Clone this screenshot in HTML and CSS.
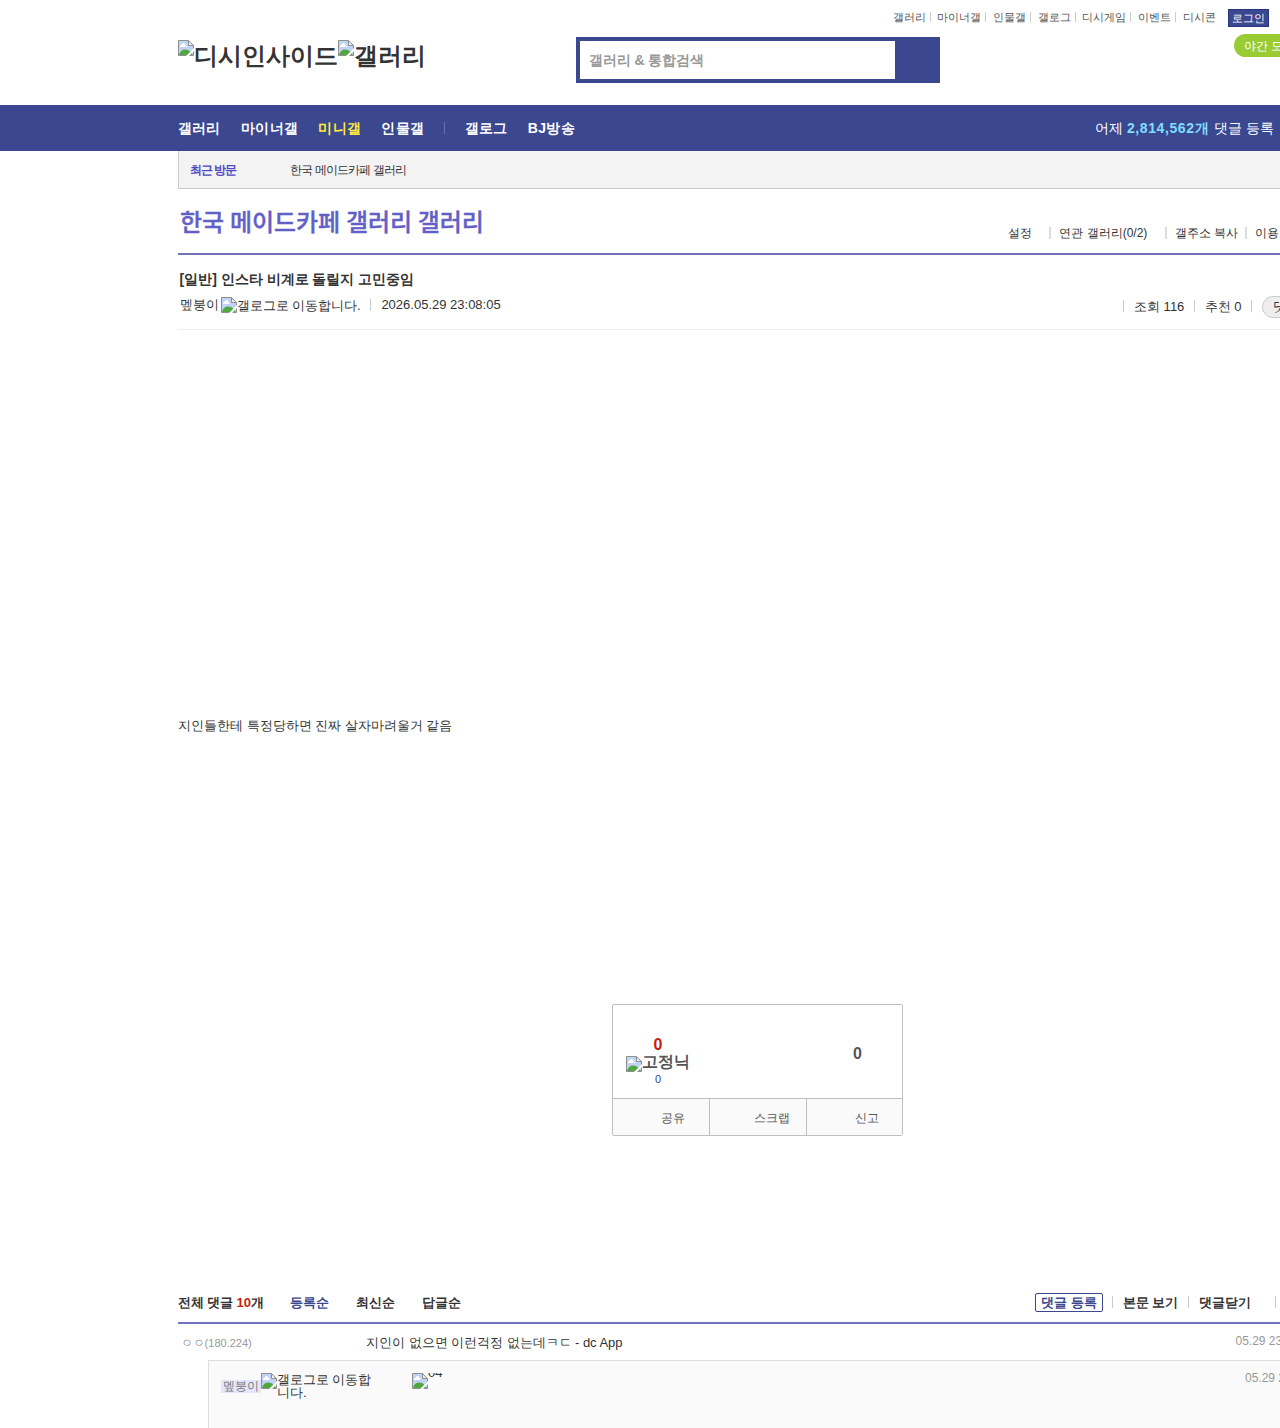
FILE: index.html
```html
<!DOCTYPE html>
<html lang="ko">
<head>
<meta charset="utf-8">
<title>한국 메이드카페 갤러리</title>
<link rel="stylesheet" href="styles.css">
</head>
<body>
<svg class="defs" width="0" height="0" aria-hidden="true">
  <symbol id="broken" viewBox="0 0 16 16">
    <path d="M.5 .5h10l5 5v10H.5z" fill="#c0d3f6"/>
    <path d="M2 7q-.3-2 1.600-2.200Q4 3 5.500 3 7.200 3.200 7.200 4.800 8.800 5 8.600 7z" fill="#fff"/>
    <path d="M1 15q1.500-5.500 6-5.500 4 0 6 3l2 2.500z" fill="#4fa83d"/>
    <path d="M.5 15.500V.5h10l5 5v10z" fill="none" stroke="#8f8f8f"/>
    <path d="M10.500 .7v4.800h4.800z" fill="#f4f4f4" stroke="#8f8f8f"/>
    <path d="M16 8v3L11 16H8z" fill="#fff"/>
  </symbol>
</svg>
<header class="head">
  <div class="logo"><svg class="bi"><use href="#broken"/></svg><span>디시인사이드</span><svg class="bi"><use href="#broken"/></svg><span>갤러리</span></div>
  <div class="search"><div class="field">갤러리 &amp; 통합검색</div></div>
  <div class="head-right">
    <ul class="util">
      <li>갤러리</li><li>마이너갤</li><li>인물갤</li><li>갤로그</li><li>디시게임</li><li>이벤트</li><li>디시콘</li><li class="login">로그인</li>
    </ul>
    <div class="night">야간 모드</div>
  </div>
</header>
<nav class="gnb">
  <ul class="menu">
    <li>갤러리</li><li>마이너갤</li><li class="on">미니갤</li><li>인물갤</li><li class="split">갤로그</li><li>BJ방송</li>
  </ul>
  <p class="count">어제 <b>2,814,562개</b> 댓글 등록</p>
</nav>
<main class="wrap">
  <div class="recent"><b>최근 방문</b><span>한국 메이드카페 갤러리</span></div>
  <div class="title">
    <h1>한국 메이드카페 갤러리 갤러리</h1>
    <ul class="opts"><li>설정</li><li>연관 갤러리(0/2)</li><li>갤주소 복사</li><li>이용안내</li></ul>
  </div>
  <section class="post-head">
    <h2>[일반] 인스타 비계로 돌릴지 고민중임</h2>
    <div class="meta">
      <span class="nick">멮붕이</span><svg class="bi"><use href="#broken"/></svg><span class="alt">갤로그로 이동합니다.</span><span class="date">2026.05.29 23:08:05</span>
      <div class="stats"><span>조회 116</span><span>추천 0</span><span class="last"><em>댓글 10</em></span></div>
    </div>
  </section>
  <article class="body"><p>지인들한테 특정당하면 진짜 살자마려울거 같음</p></article>
  <section class="vote">
    <div class="scores">
      <div class="up"><b>0</b><div class="fix"><svg class="bi"><use href="#broken"/></svg><span>고정닉</span></div><small>0</small></div>
      <div class="down">0</div>
    </div>
    <div class="acts"><span>공유</span><span>스크랩</span><span>신고</span></div>
  </section>
  <section class="comments">
    <div class="chead">
      <b class="total">전체 댓글 <i>10</i>개</b>
      <ul class="sort"><li class="on">등록순</li><li>최신순</li><li>답글순</li></ul>
      <div class="cact"><span class="write">댓글 등록</span><span class="a">본문 보기</span><span class="b">댓글닫기</span><span class="c">새로고침</span></div>
    </div>
    <div class="row"><span class="who">ㅇㅇ<small>(180.224)</small></span><span class="txt">지인이 없으면 이런걱정 없는데ㅋㄷ - dc App</span><time>05.29 23:09:44</time></div>
    <div class="reply">
      <span class="rn">멮붕이</span><svg class="bi"><use href="#broken"/></svg><span class="ralt">갤로그로 이동합니다.</span>
      <span class="con"><svg class="bi"><use href="#broken"/></svg><span>04</span></span><time>05.29 23:10:12</time>
    </div>
  </section>
</main>
</body>
</html>
```
FILE: styles.css
```css
* { margin: 0; padding: 0; box-sizing: border-box; }
html { overflow: hidden; }
body { height: 1428px; overflow: hidden; background: #fff; color: #333; font: 12px/16px "Liberation Sans", sans-serif; white-space: nowrap; }
ul { list-style: none; display: flex; }
i, em { font-style: normal; }
.defs { position: absolute; }
.bi { width: 16px; height: 16px; flex: none; display: block; }
.head { display: flex; height: 105px; padding-left: 178px; }
.logo { display: flex; flex: none; width: 398px; padding-top: 40px; font-size: 24px; font-weight: bold; line-height: 32px; }
.search { width: 364px; height: 46px; margin-top: 37px; padding: 4px 45px 4px 4px; background: #3b4890; flex: none; }
.field { height: 38px; padding-left: 9px; background: #fff; color: #999; font-size: 14px; font-weight: bold; line-height: 38px; word-spacing: -.3px; }
.head-right { width: 387px; margin-left: -47px; padding-top: 9px; flex: none; overflow: hidden; }
.util { font-size: 11px; line-height: 16px; color: #555; }
.util li { margin-right: 11.600px; position: relative; }
.util li:nth-child(-n+6)::after { content: ""; position: absolute; right: -5px; top: 3px; width: 1px; height: 10px; background: #ccc; }
.util .login { width: 41px; height: 18px; margin: 0 0 0 .4px; border: 1px solid #29367c; background: #3b4890; color: #fff; text-align: center; line-height: 17px; }
.util li:nth-child(2) { margin-left: -.3px; margin-right: 11.900px; }
.night { width: 80px; height: 23px; margin: 7px 0 0 341px; padding-left: 10px; border-radius: 12px; background: #9c3; color: #fff; line-height: 24px; }
.gnb { display: flex; height: 46px; padding-left: 178px; background: #3b4890; color: #fff; font-size: 14px; line-height: 46px; }
.menu { width: 917px; flex: none; font-weight: bold; letter-spacing: .3px; }
.menu li { margin-right: 20.100px; }
.menu li:first-child { margin-right: 21px; letter-spacing: 0; }
.menu .on { color: #ffeb3b; }
.menu .split { position: relative; margin-left: 20.500px; }
.menu .split::before { content: ""; position: absolute; left: -21px; top: 17px; width: 1px; height: 12px; background: #6470b5; }
.count b { color: #80deff; letter-spacing: .6px; margin-right: .6px; }
.wrap { width: 1160px; margin-left: 178px; }
.recent { display: flex; height: 38px; padding-left: 11px; border: solid #ccc; border-width: 0 0 1px 1px; background: #f3f3f3; line-height: 38px; letter-spacing: -.9px; }
.recent b { width: 100px; color: #4e48c4; letter-spacing: -1px; }
.title { display: flex; height: 66px; border-bottom: 2px solid #7673b8; }
.title h1 { width: 830px; padding: 15px 0 0 2px; color: #625fc6; font: 500 24px/34px "Noto Sans CJK KR", sans-serif; letter-spacing: -.08px; word-spacing: -.7px; -webkit-text-stroke: .35px #625fc6; flex: none; }
.opts { padding-top: 36px; }
.opts li { position: relative; margin-right: 27.300px; }
.opts li:nth-child(2) { margin-right: 27.700px; }
.opts li + li::before { content: ""; position: absolute; left: -10px; top: 2px; width: 2px; height: 12px; background: #ddd; }
.opts li:nth-child(3) { margin-right: 17px; }
.post-head { height: 75px; padding: 14px 0 0 1.500px; border-bottom: 1px solid #eee; }
.post-head h2 { font-size: 14px; line-height: 20px; }
.meta { display: flex; height: 26px; padding: 8px 0 0 .5px; font-size: 13px; line-height: 16px; }
.meta > * { flex: none; }
.meta .nick { width: 41px; }
.meta .alt { width: 133px; padding-top: 1px; word-spacing: -.6px; }
.meta .date { width: 753px; height: 12px; margin-top: 2px; padding-left: 10.400px; border-left: 1px solid #ccc; line-height: 12px; }
.stats { display: flex; padding-top: 3px; line-height: 14px; }
.stats span { height: 12px; padding: 0 9.400px 0 10px; border-left: 1px solid #ccc; }
.stats em { display: block; width: 80px; height: 22px; margin-top: -4px; padding-left: 10px; border: 1px solid #ccc; border-radius: 11px; background: #eee; line-height: 20px; }
.body { height: 674px; padding-top: 388px; font-size: 13px; }
.vote { width: 291px; height: 132px; margin-left: 434px; border: 1px solid #bfbfbf; border-radius: 2px; }
.scores { display: flex; height: 93px; font-weight: bold; color: #555; font-size: 16px; }
.up { width: 90px; padding-top: 31px; text-align: center; line-height: 18px; }
.up > b { display: block; color: #c81c0c; }
.fix { display: flex; height: 18px; align-items: flex-end; padding-left: 13px; line-height: 16px; }
.fix span { height: 18px; }
.up small { display: block; color: #3b4890; font-size: 11px; font-weight: normal; line-height: 15px; }
.down { margin-left: 150px; line-height: 98px; }
.acts { display: flex; height: 37px; border-top: 1px solid #bfbfbf; background: #fafafa; color: #555; line-height: 38px; }
.acts span { flex: none; width: 97px; padding-left: 48px; border-right: 1px solid #bfbfbf; }
.acts span:nth-child(2) { padding-left: 44px; }
.acts span:last-child { width: 95px; border: 0; }
.comments { padding-top: 150px; font-size: 13px; }
.chead { display: flex; height: 38px; padding-top: 7px; border-bottom: 2px solid #7270c4; line-height: 19px; font-weight: bold; }
.total { width: 112px; word-spacing: -.4px; }
.total i { color: #c81c0c; }
.sort { width: 745px; gap: 27px; }
.sort .on { color: #3b4890; }
.cact { display: flex; }
.write { width: 68px; height: 19px; margin-right: 9px; border: 1px solid #3b4890; border-radius: 2px; color: #3b4890; text-align: center; line-height: 17px; }
.a, .b, .c { height: 12px; margin-top: 3px; padding-left: 10px; border-left: 1px solid #ccc; line-height: 13px; }
.a { width: 76px; word-spacing: -.6px; }
.b { width: 87px; }
.row { display: flex; height: 36px; padding-left: 3px; line-height: 38px; }
.who { width: 185px; color: #999; font-size: 12px; }
.who small { font-size: 11px; margin-left: -.4px; }
.txt { width: 869.500px; word-spacing: -.1px; }
time { color: #999; font-size: 12px; line-height: 34px; }
.reply { display: flex; height: 80px; margin-left: 30px; padding: 12px 0 0 12px; border: solid #ddd; border-width: 1px 0 0 1px; background: #fafafa; }
.rn { width: 40px; height: 13px; margin-top: 7px; padding-left: 2px; background: #e4e7fb; color: #777; font-size: 12px; line-height: 13px; }
.ralt { width: 135px; padding-right: 38px; white-space: normal; line-height: 13px; word-break: break-all; word-spacing: -.5px; }
.con { display: flex; width: 833px; height: 16px; overflow: hidden; }
.con > span { line-height: 0; }
.reply time { line-height: 10px; }
```
